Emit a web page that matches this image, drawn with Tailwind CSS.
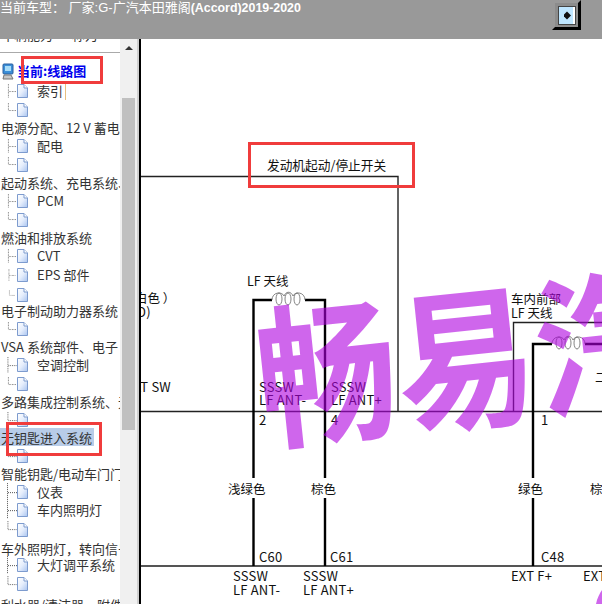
<!DOCTYPE html>
<html lang="zh">
<head>
<meta charset="UTF-8">
<title>线路图</title>
<script src="https://cdn.jsdelivr.net/npm/@tailwindcss/browser@4"></script>
</head>
<body class="relative h-screen overflow-hidden flex flex-col bg-white [font-family:'Noto_Sans_CJK_SC',sans-serif]">
<svg class="absolute w-0 h-0">
  <defs>
    <linearGradient id="docfill" x1="0" y1="0" x2="1" y2="1"><stop offset="0" stop-color="#fff"/><stop offset=".5" stop-color="#e6eefc"/><stop offset="1" stop-color="#a9c4f0"/></linearGradient>
    <symbol id="doc" viewBox="0 0 11 14"><path d="M.5.5H7L10.5 4V13.5H.5Z" fill="url(#docfill)" stroke="#7d9bce"/><path d="M7 .5V4H10.5" fill="#fff" stroke="#7d9bce"/></symbol>
    <symbol id="tee" viewBox="0 0 10 18"><path d="M.5 0V18M1 9.5H10" fill="none" stroke="#555" stroke-dasharray="1 1"/></symbol>
    <symbol id="el" viewBox="0 0 10 18"><path d="M.5 0V9.5M1 9.5H10" fill="none" stroke="#555" stroke-dasharray="1 1"/></symbol>
    <g id="coil" fill="none" stroke="#666" stroke-width=".8">
      <path d="M272 300C272 292 282 291 284 296C286 291 291 291 293 296C295 291 305 292 305 300"/>
      <ellipse cx="279" cy="299" rx="3" ry="6"/>
      <ellipse cx="288" cy="299" rx="3" ry="6"/>
      <ellipse cx="297" cy="299" rx="3" ry="6"/>
    </g>
  </defs>
</svg>

<header class="h-[39px] shrink-0 bg-[#999999] flex items-start justify-between pr-[21px]">
  <p class="text-[13px] leading-[15px] text-white whitespace-pre [font-family:'Liberation_Sans','Noto_Sans_CJK_SC',sans-serif]">当前车型： 厂家:G-广汽本田雅阁<b class="text-[12.4px]">(Accord)2019-2020</b></p>
  <button class="w-[29px] h-[30px] bg-[#8c8c8c] border-[3px] border-t-[#999999] border-l-[#999999] border-r-black border-b-black flex items-center justify-center">
    <span class="w-[18px] h-[19px] bg-[#bfe6ff] border border-[#444] flex items-center justify-end">
      <svg class="w-[7px] h-[9px] mr-[2px]" viewBox="0 0 7 8"><path d="M3 0 7 4 3 8 0 5V3Z" fill="#111"/></svg>
      <span class="w-[2px] h-full bg-white"></span>
    </span>
  </button>
</header>

<main class="flex flex-1 min-h-0">
  <aside class="w-[120px] shrink-0 overflow-hidden text-[13px] leading-[18px] text-[#333] whitespace-nowrap">
    <div class="h-[13px] -mt-[13px] mb-[13px] pl-[1px]">车辆能力 · 称为</div>
    <div class="border-t border-[#aaa] pt-[9px]">
      <div class="flex items-center h-[18.3px] pl-[2px] gap-[3px] font-bold text-[#0000ee]">
        <svg class="w-[12px] h-[17px] shrink-0" viewBox="0 0 12 17"><rect x="1" y="1" width="10" height="10" rx="1" fill="#3b8fd8" stroke="#2a5f9e"/><rect x="3" y="3" width="6" height="5" fill="#a8dcf8"/><path d="M2 12H9L11 16H1Z" fill="#c8c8c8" stroke="#777"/></svg>
        <span>当前:线路图</span>
      </div>
      <div class="flex items-center h-[18.3px] pl-[7px] pt-[4px]"><svg class="w-[10px] h-full shrink-0"><use href="#tee"/></svg><svg class="w-[11px] h-[14px] shrink-0"><use href="#doc"/></svg><span class="ml-[9px] border-r border-[#e8c080] pr-[2px]">索引</span></div>
      <div class="flex items-center h-[18.3px] pl-[7px] pt-[4px]"><svg class="w-[10px] h-full shrink-0"><use href="#el"/></svg><svg class="w-[11px] h-[14px] shrink-0"><use href="#doc"/></svg></div>
      <div class="h-[18.3px] pl-[1px] leading-[22px]">电源分配、12 V 蓄电池</div>
      <div class="flex items-center h-[18.3px] pl-[7px] pt-[4px]"><svg class="w-[10px] h-full shrink-0"><use href="#tee"/></svg><svg class="w-[11px] h-[14px] shrink-0"><use href="#doc"/></svg><span class="ml-[9px]">配电</span></div>
      <div class="flex items-center h-[18.3px] pl-[7px] pt-[4px]"><svg class="w-[10px] h-full shrink-0"><use href="#el"/></svg><svg class="w-[11px] h-[14px] shrink-0"><use href="#doc"/></svg></div>
      <div class="h-[18.3px] pl-[1px] leading-[22px]">起动系统、充电系统、</div>
      <div class="flex items-center h-[18.3px] pl-[7px] pt-[4px]"><svg class="w-[10px] h-full shrink-0"><use href="#tee"/></svg><svg class="w-[11px] h-[14px] shrink-0"><use href="#doc"/></svg><span class="ml-[9px]">PCM</span></div>
      <div class="flex items-center h-[18.3px] pl-[7px] pt-[4px]"><svg class="w-[10px] h-full shrink-0"><use href="#el"/></svg><svg class="w-[11px] h-[14px] shrink-0"><use href="#doc"/></svg></div>
      <div class="h-[18.3px] pl-[1px] leading-[22px]">燃油和排放系统</div>
      <div class="flex items-center h-[18.3px] pl-[7px] pt-[4px]"><svg class="w-[10px] h-full shrink-0"><use href="#tee"/></svg><svg class="w-[11px] h-[14px] shrink-0"><use href="#doc"/></svg><span class="ml-[9px]">CVT</span></div>
      <div class="flex items-center h-[18.3px] pl-[7px] pt-[6px]"><svg class="w-[10px] h-full shrink-0"><use href="#tee"/></svg><svg class="w-[11px] h-[14px] shrink-0"><use href="#doc"/></svg><span class="ml-[9px]">EPS 部件</span></div>
      <div class="flex items-center h-[18.3px] pl-[7px] pt-[8px]"><svg class="w-[10px] h-full shrink-0"><use href="#el"/></svg><svg class="w-[11px] h-[14px] shrink-0"><use href="#doc"/></svg></div>
      <div class="h-[18.3px] pl-[1px] leading-[22px]">电子制动助力器系统</div>
      <div class="flex items-center h-[18.3px] pl-[7px] pt-[4px]"><svg class="w-[10px] h-full shrink-0"><use href="#el"/></svg><svg class="w-[11px] h-[14px] shrink-0"><use href="#doc"/></svg></div>
      <div class="h-[18.3px] pl-[1px] leading-[22px]">VSA 系统部件、电子</div>
      <div class="flex items-center h-[18.3px] pl-[7px] pt-[2px]"><svg class="w-[10px] h-full shrink-0"><use href="#tee"/></svg><svg class="w-[11px] h-[14px] shrink-0"><use href="#doc"/></svg><span class="ml-[9px]">空调控制</span></div>
      <div class="flex items-center h-[18.3px] pl-[7px] pt-[4px]"><svg class="w-[10px] h-full shrink-0"><use href="#el"/></svg><svg class="w-[11px] h-[14px] shrink-0"><use href="#doc"/></svg></div>
      <div class="h-[18.3px] pl-[1px] leading-[22px]">多路集成控制系统、无</div>
      <div class="flex items-center h-[18.3px] pl-[7px] pt-[2px]"><svg class="w-[10px] h-full shrink-0"><use href="#el"/></svg><svg class="w-[11px] h-[14px] shrink-0"><use href="#doc"/></svg></div>
      <div class="h-[18.3px] pl-[1px] w-[94px] leading-[20px] bg-[#b8cce8]">无钥匙进入系统</div>
      <div class="flex items-center h-[18.3px] pl-[7px] pt-[2px]"><svg class="w-[10px] h-full shrink-0"><use href="#el"/></svg><svg class="w-[11px] h-[14px] shrink-0"><use href="#doc"/></svg></div>
      <div class="h-[18.3px] pl-[1px] leading-[18px]">智能钥匙/电动车门门</div>
      <div class="flex items-center h-[18.3px] pl-[7px]"><svg class="w-[10px] h-full shrink-0"><use href="#tee"/></svg><svg class="w-[11px] h-[14px] shrink-0"><use href="#doc"/></svg><span class="ml-[9px]">仪表</span></div>
      <div class="flex items-center h-[18.3px] pl-[7px]"><svg class="w-[10px] h-full shrink-0"><use href="#tee"/></svg><svg class="w-[11px] h-[14px] shrink-0"><use href="#doc"/></svg><span class="ml-[9px]">车内照明灯</span></div>
      <div class="flex items-center h-[18.3px] pl-[7px] pt-[2px]"><svg class="w-[10px] h-full shrink-0"><use href="#el"/></svg><svg class="w-[11px] h-[14px] shrink-0"><use href="#doc"/></svg></div>
      <div class="h-[18.3px] pl-[1px] leading-[22px]">车外照明灯，转向信号</div>
      <div class="flex items-center h-[18.3px] pl-[7px]"><svg class="w-[10px] h-full shrink-0"><use href="#tee"/></svg><svg class="w-[11px] h-[14px] shrink-0"><use href="#doc"/></svg><span class="ml-[9px]">大灯调平系统</span></div>
      <div class="flex items-center h-[18.3px] pl-[7px] pt-[2px]"><svg class="w-[10px] h-full shrink-0"><use href="#el"/></svg><svg class="w-[11px] h-[14px] shrink-0"><use href="#doc"/></svg></div>
      <div class="h-[18.3px] pl-[1px] leading-[24px]">利水器/清洁器，附件</div>
    </div>
  </aside>

  <div class="w-[17px] shrink-0 bg-[#f0f0f0] flex flex-col items-center">
    <svg class="w-[8px] h-[4px] mt-[7px] mb-[48px]" viewBox="0 0 8 4"><path d="M4 0 8 4H0Z" fill="#333"/></svg>
    <div class="w-[13px] h-[332px] bg-[#c0c0c0]"></div>
  </div>
  <div class="w-[4px] shrink-0 bg-black border-l-2 border-[#d0d0d0]"></div>

  <section class="relative flex-1 overflow-hidden">
    <svg class="absolute inset-0 w-full h-full text-[13px]" viewBox="141 39 461 565">
      <g fill="none" stroke="#222" stroke-width="1.4">
        <path d="M141 176.5H398V411M141 411.5H602M513.5 411V322.5H602"/>
      </g>
      <path d="M141 566H602" stroke="#555" stroke-width="2"/>
      <g fill="none" stroke="#000" stroke-width="2.4">
        <path d="M253.5 566V498M253.5 478V300H272M305 300H325V478M325 498V566M533 566V498M533 478V344H552M585 344H602"/>
      </g>
      <use href="#coil"/>
      <use href="#coil" x="280" y="44"/>
      <path d="M596 604C597 598 600 593 602 590V604Z" fill="#cf66ec"/>
      <g fill="#111" class="tracking-[.2px]">
        <text x="267" y="170" class="text-[12.7px] tracking-normal">发动机起动/停止开关</text>
        <text x="247" y="286" class="text-[12.5px] tracking-normal">LF 天线</text>
        <text x="135" y="303" class="text-[12.5px] tracking-normal">白色 ）</text>
        <text x="137" y="317">D)</text>
        <text x="133" y="392">AT SW</text>
        <text x="259" y="392">SSSW</text>
        <text x="259" y="405">LF ANT-</text>
        <text x="259" y="425">2</text>
        <text x="331" y="392">SSSW</text>
        <text x="331" y="405">LF ANT+</text>
        <text x="331" y="425">4</text>
        <text x="511" y="304" class="text-[12.5px] tracking-normal">车内前部</text>
        <text x="511" y="318" class="text-[12.5px] tracking-normal">LF 天线</text>
        <text x="595" y="382">二</text>
        <text x="541" y="425">1</text>
        <text x="228" y="494" class="text-[12.5px] tracking-normal">浅绿色</text>
        <text x="311" y="494" class="text-[12.5px] tracking-normal">棕色</text>
        <text x="518" y="494" class="text-[12.5px] tracking-normal">绿色</text>
        <text x="590" y="494" class="text-[12.5px] tracking-normal">棕色</text>
        <text x="259" y="562">C60</text>
        <text x="330" y="562">C61</text>
        <text x="541" y="562">C48</text>
        <text x="233" y="581">SSSW</text>
        <text x="233" y="595">LF ANT-</text>
        <text x="303" y="581">SSSW</text>
        <text x="303" y="595">LF ANT+</text>
        <text x="511" y="581">EXT F+</text>
        <text x="583" y="581">EXT F-</text>
      </g>
    </svg>
    <span class="absolute left-[115px] top-[263px] -rotate-6 scale-y-110 origin-left text-[140px] leading-none font-bold whitespace-nowrap text-[#af00df]/60">畅易汽</span>
  </section>
</main>

<div class="absolute left-[21px] top-[56px] w-[82px] h-[28px] border-[3px] border-[#f03c3c]"></div>
<div class="absolute left-[6px] top-[422px] w-[96px] h-[34px] border-[3px] border-[#f03c3c]"></div>
<div class="absolute left-[248px] top-[142px] w-[167px] h-[46px] border-[3px] border-[#f03c3c]"></div>
</body>
</html>
